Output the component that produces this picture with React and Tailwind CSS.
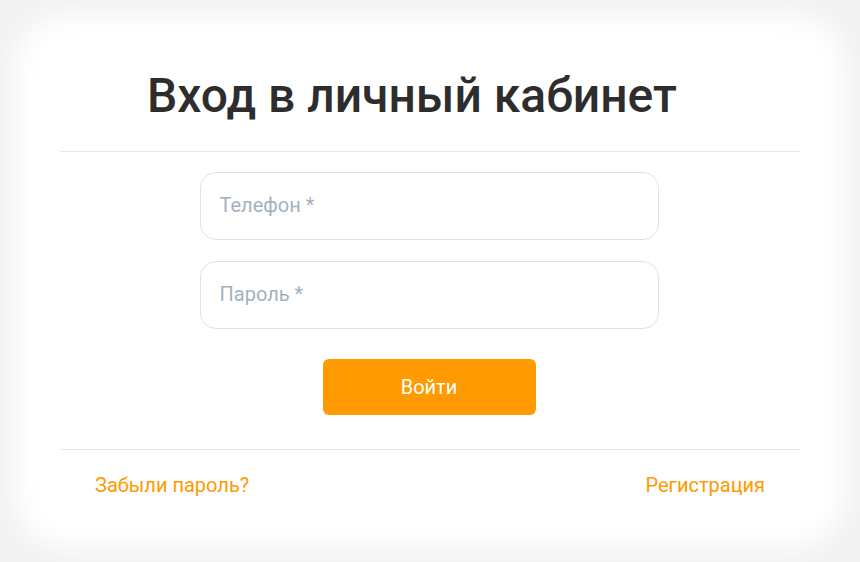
import React from "react";

const App = () => {
  return (
    <div
      className="w-[860px] h-[562px] bg-[#f2f2f2] overflow-hidden p-[36px]"
      style={{ fontFamily: "Roboto, 'Noto Sans', sans-serif" }}
    >
      <div className="h-[490px] bg-white rounded-[30px] shadow-[0_0_30px_22px_#ffffff] px-[24px] pt-[32px]">
        {/* Title */}
        <h1 className="text-center text-[48px] leading-[56px] text-[#2d2d2d] font-medium pr-[36px]">
          Вход в личный кабинет
        </h1>
        <div className="mt-[27px] h-px bg-[#e6e6e6]" />

        {/* Form */}
        <div className="flex flex-col items-center mt-[20px] pr-[2px]">
          <input
            type="text"
            placeholder="Телефон *"
            className="w-[459px] h-[68px] rounded-[16px] border border-[#dde2e8] px-[19px] pb-[3px] text-[20px] text-[#333] placeholder:text-[#a3b1be] outline-none"
          />
          <input
            type="password"
            placeholder="Пароль *"
            className="mt-[21px] w-[459px] h-[68px] rounded-[16px] border border-[#dde2e8] px-[19px] pb-[3px] text-[20px] text-[#333] placeholder:text-[#a3b1be] outline-none"
          />
          <button className="mt-[30px] w-[213px] h-[56px] rounded-[6px] bg-[#ff9a00] text-white text-[20px]">
            Войти
          </button>
        </div>

        <div className="mt-[34px] h-px bg-[#e6e6e6]" />

        {/* Links */}
        <div className="flex justify-between px-[35px] mt-[23px]">
          <a href="#" className="text-[20px] leading-[24px] text-[#ff9a00]">
            Забыли пароль?
          </a>
          <a href="#" className="text-[20px] leading-[24px] text-[#ff9a00]">
            Регистрация
          </a>
        </div>
      </div>
    </div>
  );
};

export default App;
